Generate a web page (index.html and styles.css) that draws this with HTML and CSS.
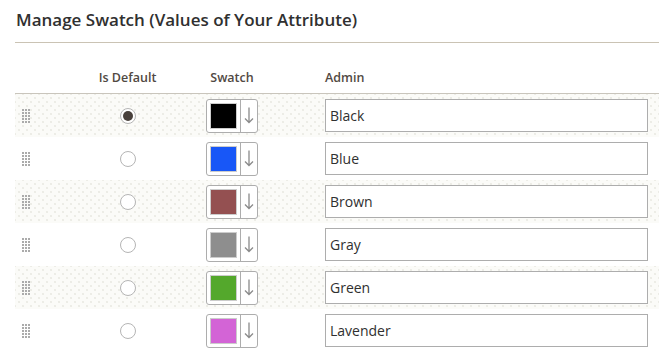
FILE: index.html
```html
<!DOCTYPE html>
<html lang="en">
<head>
  <meta charset="UTF-8">
  <meta name="viewport" content="width=device-width, initial-scale=1.0">
  <title>Manage Swatch</title>
  <link rel="stylesheet" href="styles.css">
</head>
<body>
  <section class="swatch-panel">
    <h2 class="panel-title">Manage Swatch (Values of Your Attribute)</h2>
    <div class="swatch-table">
      <div class="swatch-row head">
        <div class="cell"></div>
        <div class="cell center">Is Default</div>
        <div class="cell center">Swatch</div>
        <div class="cell admin">Admin</div>
      </div>

      <div class="swatch-row odd">
        <div class="cell"><span class="drag"></span></div>
        <div class="cell center"><span class="radio checked"></span></div>
        <div class="cell center">
          <div class="swatch-pick">
            <span class="chip-wrap"><span class="chip" style="background:#000000"></span></span>
            <span class="arrow"><svg width="10" height="17" viewBox="0 0 10 17"><path d="M5 0.5V15.5M1 11.5L5 15.5L9 11.5" fill="none" stroke="#8a8a8a" stroke-width="1.3"/></svg></span>
          </div>
        </div>
        <div class="cell admin"><input type="text" value="Black"></div>
      </div>

      <div class="swatch-row">
        <div class="cell"><span class="drag"></span></div>
        <div class="cell center"><span class="radio"></span></div>
        <div class="cell center">
          <div class="swatch-pick">
            <span class="chip-wrap"><span class="chip" style="background:#1857f7"></span></span>
            <span class="arrow"><svg width="10" height="17" viewBox="0 0 10 17"><path d="M5 0.5V15.5M1 11.5L5 15.5L9 11.5" fill="none" stroke="#8a8a8a" stroke-width="1.3"/></svg></span>
          </div>
        </div>
        <div class="cell admin"><input type="text" value="Blue"></div>
      </div>

      <div class="swatch-row odd">
        <div class="cell"><span class="drag"></span></div>
        <div class="cell center"><span class="radio"></span></div>
        <div class="cell center">
          <div class="swatch-pick">
            <span class="chip-wrap"><span class="chip" style="background:#945051"></span></span>
            <span class="arrow"><svg width="10" height="17" viewBox="0 0 10 17"><path d="M5 0.5V15.5M1 11.5L5 15.5L9 11.5" fill="none" stroke="#8a8a8a" stroke-width="1.3"/></svg></span>
          </div>
        </div>
        <div class="cell admin"><input type="text" value="Brown"></div>
      </div>

      <div class="swatch-row">
        <div class="cell"><span class="drag"></span></div>
        <div class="cell center"><span class="radio"></span></div>
        <div class="cell center">
          <div class="swatch-pick">
            <span class="chip-wrap"><span class="chip" style="background:#8e8e8e"></span></span>
            <span class="arrow"><svg width="10" height="17" viewBox="0 0 10 17"><path d="M5 0.5V15.5M1 11.5L5 15.5L9 11.5" fill="none" stroke="#8a8a8a" stroke-width="1.3"/></svg></span>
          </div>
        </div>
        <div class="cell admin"><input type="text" value="Gray"></div>
      </div>

      <div class="swatch-row odd">
        <div class="cell"><span class="drag"></span></div>
        <div class="cell center"><span class="radio"></span></div>
        <div class="cell center">
          <div class="swatch-pick">
            <span class="chip-wrap"><span class="chip" style="background:#54a82c"></span></span>
            <span class="arrow"><svg width="10" height="17" viewBox="0 0 10 17"><path d="M5 0.5V15.5M1 11.5L5 15.5L9 11.5" fill="none" stroke="#8a8a8a" stroke-width="1.3"/></svg></span>
          </div>
        </div>
        <div class="cell admin"><input type="text" value="Green"></div>
      </div>

      <div class="swatch-row">
        <div class="cell"><span class="drag"></span></div>
        <div class="cell center"><span class="radio"></span></div>
        <div class="cell center">
          <div class="swatch-pick">
            <span class="chip-wrap"><span class="chip" style="background:#d364d6"></span></span>
            <span class="arrow"><svg width="10" height="17" viewBox="0 0 10 17"><path d="M5 0.5V15.5M1 11.5L5 15.5L9 11.5" fill="none" stroke="#8a8a8a" stroke-width="1.3"/></svg></span>
          </div>
        </div>
        <div class="cell admin"><input type="text" value="Lavender"></div>
      </div>
    </div>
  </section>
</body>
</html>
```

FILE: styles.css
```css
body {
  margin: 0;
  background: #fff;
  font-family: 'Open Sans', 'Liberation Sans', Arial, sans-serif;
  color: #303030;
}
.swatch-panel {
  padding-left: 15px;
}
.panel-title {
  margin: 0;
  padding: 8px 0 10px 1px;
  font-size: 17px;
  line-height: 24px;
  font-weight: 600;
  color: #303030;
  border-bottom: 1px solid #cac3b4;
}
.swatch-row {
  display: grid;
  grid-template-columns: 50px 125px 84px 1fr;
  align-items: center;
  height: 43px;
}
.swatch-row.head {
  height: 50px;
  align-items: end;
  border-bottom: 1px solid #c9c5bc;
  font-size: 12.5px;
  font-weight: 600;
  color: #514943;
  line-height: 18px;
}
.swatch-row.head .cell {
  padding-bottom: 6px;
}
.swatch-row.odd {
  background-color: #fbfbf8;
  background-image:
    radial-gradient(circle, #ecece6 0.7px, transparent 1px),
    radial-gradient(circle, #ecece6 0.7px, transparent 1px);
  background-size: 8px 8px;
  background-position: 0 0, 4px 4px;
}
.cell.center {
  display: flex;
  justify-content: center;
}
.cell.admin {
  padding: 0 11px 0 51px;
}
.drag {
  display: block;
  width: 8px;
  height: 14px;
  margin-left: 7px;
  background-image:
    linear-gradient(90deg, transparent 2px, #fff 2px, #fff 3px, transparent 3px, transparent 5px, #fff 5px, #fff 6px, transparent 6px),
    repeating-linear-gradient(180deg, #ababab 0, #ababab 2px, transparent 2px, transparent 3px);
}
.swatch-row.odd .drag {
  background-image:
    linear-gradient(90deg, transparent 2px, #fbfbf8 2px, #fbfbf8 3px, transparent 3px, transparent 5px, #fbfbf8 5px, #fbfbf8 6px, transparent 6px),
    repeating-linear-gradient(180deg, #ababab 0, #ababab 2px, transparent 2px, transparent 3px);
}
.radio {
  width: 16px;
  height: 16px;
  box-sizing: border-box;
  border: 1px solid #b5b5b5;
  border-radius: 50%;
  background: #fff;
  display: flex;
  align-items: center;
  justify-content: center;
}
.radio.checked::after {
  content: '';
  width: 10px;
  height: 10px;
  border-radius: 50%;
  background: #48403b;
}
.swatch-pick {
  display: flex;
  width: 52px;
  height: 34px;
  box-sizing: border-box;
  border: 1px solid #adadad;
  border-radius: 3px;
  background: #fff;
}
.chip-wrap {
  padding: 3px;
  border-right: 1px solid #adadad;
}
.chip {
  display: block;
  width: 27px;
  height: 26px;
  box-sizing: border-box;
  border: 1px solid #cccccc;
}
.arrow {
  flex: 1;
  display: flex;
  align-items: center;
  justify-content: center;
}
input[type="text"] {
  display: block;
  width: 100%;
  height: 33px;
  box-sizing: border-box;
  border: 1px solid #adadad;
  padding: 0 4px;
  font-family: inherit;
  font-size: 14px;
  color: #303030;
  background: #fff;
  outline: none;
}
```
